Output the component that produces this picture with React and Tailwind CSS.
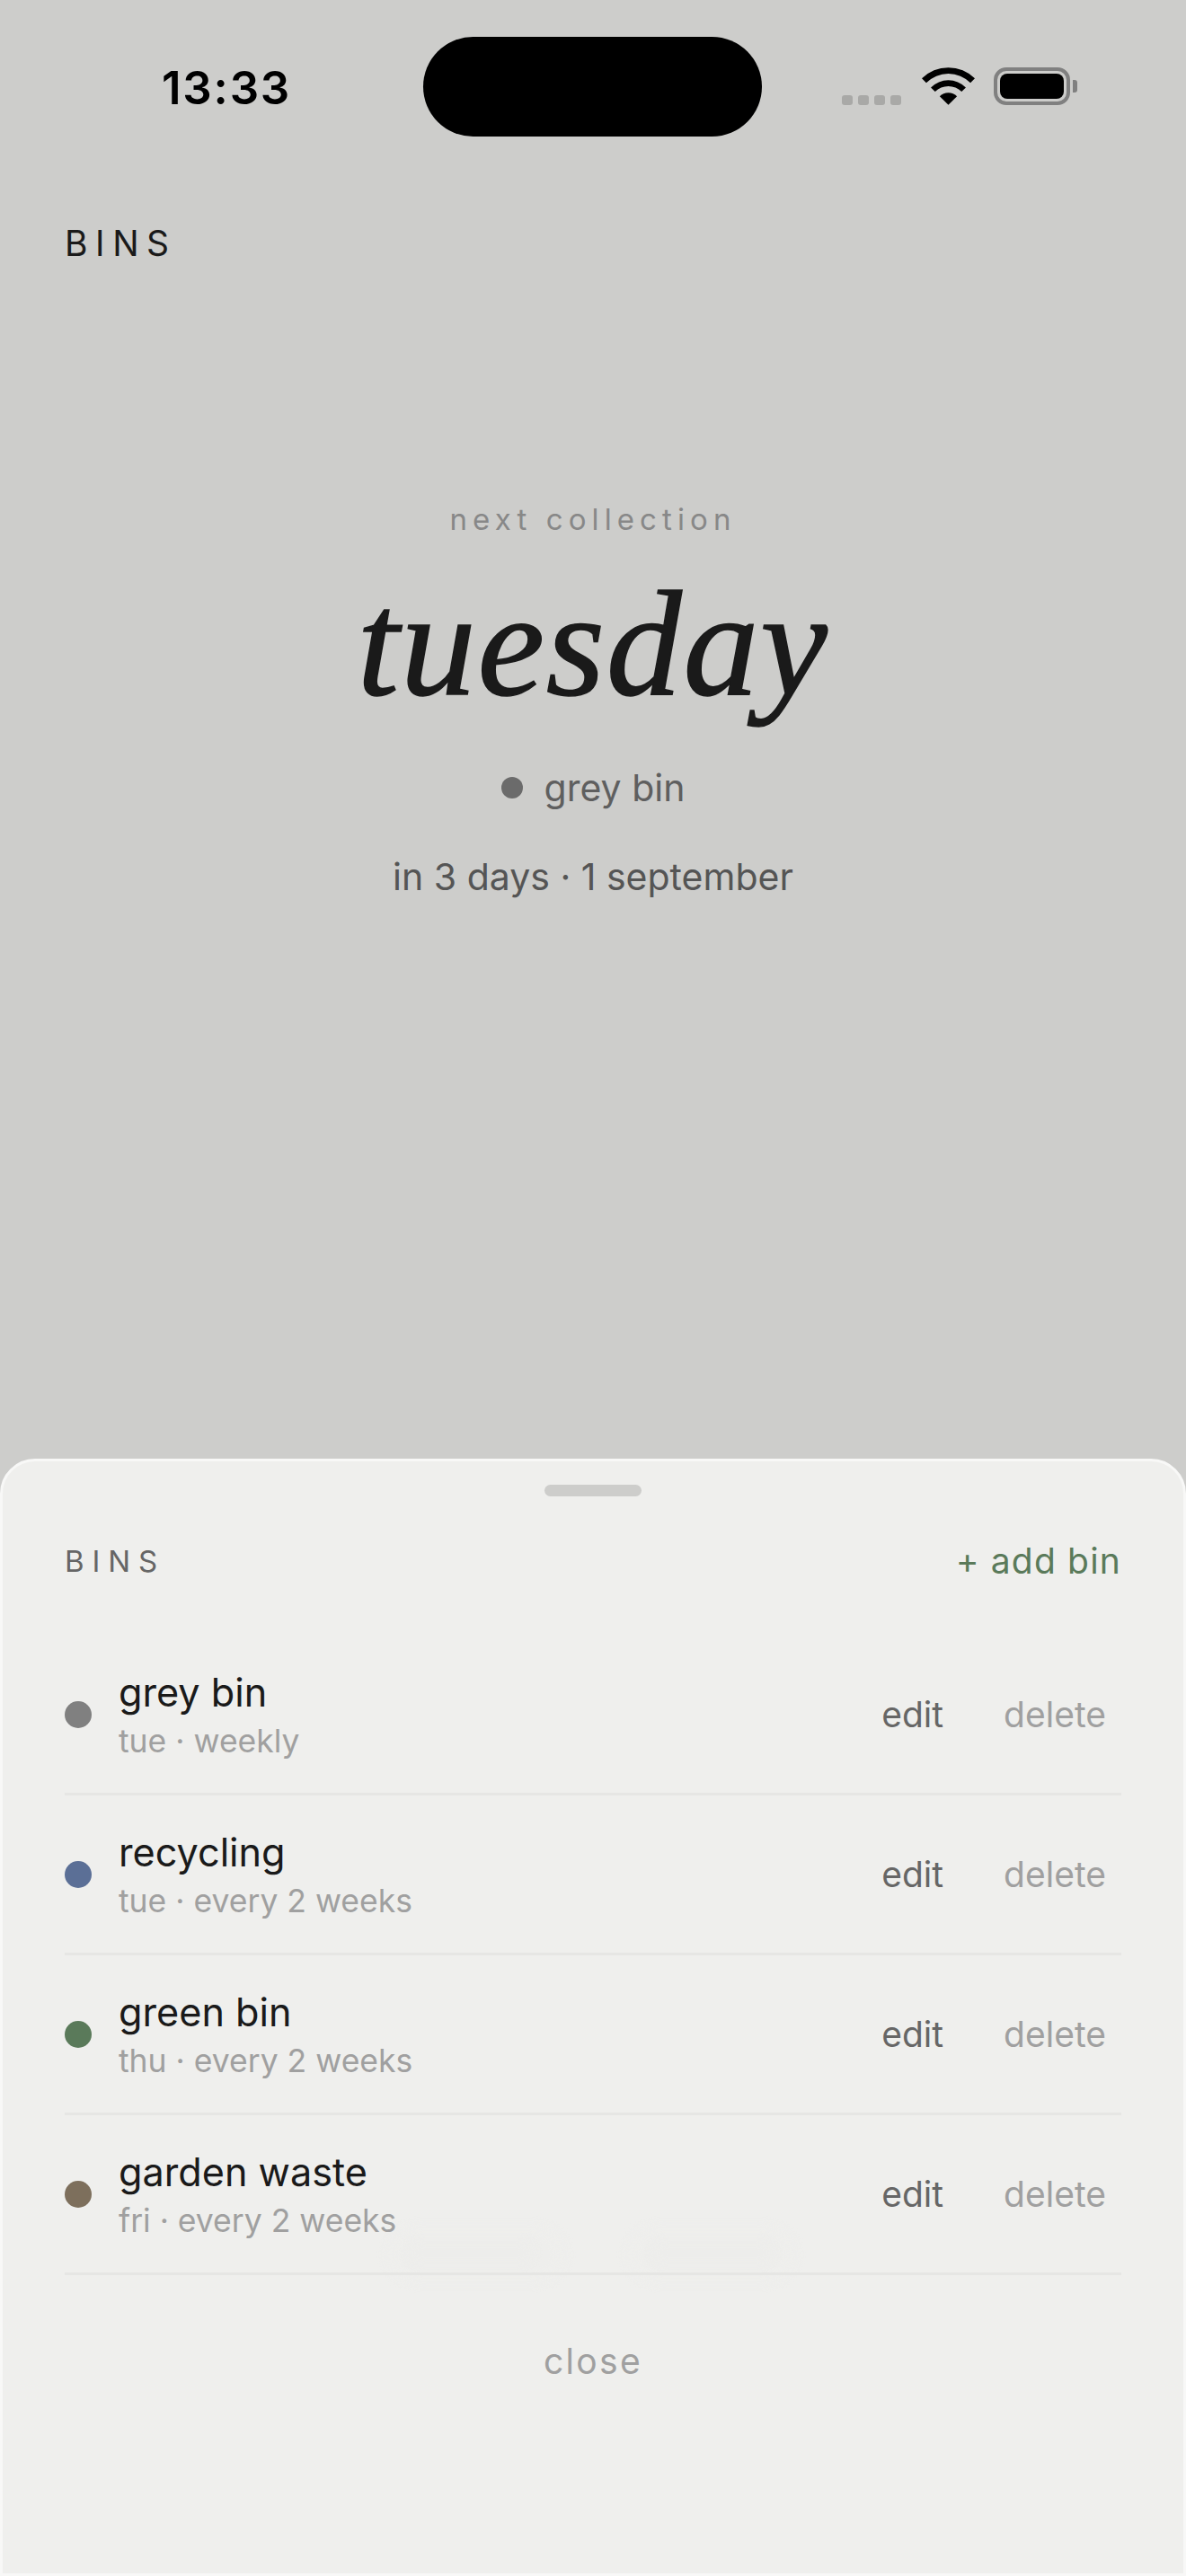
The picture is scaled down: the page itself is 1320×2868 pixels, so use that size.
const rows = [
  { name: "grey bin", sub: "tue · weekly", dot: "bg-[#808080]" },
  { name: "recycling", sub: "tue · every 2 weeks", dot: "bg-[#5b6f96]" },
  { name: "green bin", sub: "thu · every 2 weeks", dot: "bg-[#5a7a5a]" },
  { name: "garden waste", sub: "fri · every 2 weeks", dot: "bg-[#7d6f5c]" },
];

function Wifi() {
  return (
    <svg width="59" height="42" viewBox="-1.2 0 59.4 42" className="block">
      <path d="M-1.2 12.3A42 42 0 0 1 58.2 12.3L53.25 17.25A35 35 0 0 0 3.75 17.25Z" fill="#000" />
      <path d="M8.9 22.4A27.7 27.7 0 0 1 48.1 22.4L43.35 27.15A21 21 0 0 0 13.65 27.15Z" fill="#000" />
      <path d="M18.8 32.3A13.7 13.7 0 0 1 38.2 32.3L28.5 42Z" fill="#000" />
    </svg>
  );
}

function Row({ name, sub, dot }) {
  return (
    <div className="flex h-[178px] items-center border-b-[3px] border-[#e6e6e4] pt-[1px]">
      <span className={`h-[30px] w-[30px] shrink-0 rounded-full ${dot}`} />
      <div className="ml-[30px] flex-1">
        <div className="text-[43.2px] leading-[54px] text-[#1a1a1a]">{name}</div>
        <div className="mt-[5px] text-[35.5px] leading-[46px] text-[#a0a0a0]">{sub}</div>
      </div>
      <span className="text-[39px] leading-[48px] text-[#666666]">edit</span>
      <span className="ml-[67px] mr-[17px] text-[39px] leading-[48px] text-[#a0a0a0]">delete</span>
    </div>
  );
}

function Smudge({ outer, inner }) {
  return (
    <>
      <div className={`absolute top-[853px] h-[60px] rounded-full bg-[#eeeeec] blur-[6px] ${outer}`} />
      <div className={`absolute top-[868px] h-[26px] rounded-full bg-[#ededeb] blur-[4px] ${inner}`} />
    </>
  );
}

export default function App() {
  return (
    <div className="flex h-[2868px] w-[1320px] flex-col overflow-hidden bg-[#cdcdcb] font-['Inter',sans-serif]">
      <div className="flex h-[152px] shrink-0 items-start pt-[41px]">
        <div className="ml-[180px] mt-[27px] w-[291px] text-[51px] font-semibold leading-[60px] tracking-[0.035em] text-black">13:33</div>
        <div className="h-[111px] w-[377px] rounded-[56px] bg-black" />
        <div className="ml-[89px] mt-[65px] flex gap-[6.5px]">
          <span className="h-[11px] w-[11.5px] rounded-[3px] bg-[#a9a9a7]" />
          <span className="h-[11px] w-[11.5px] rounded-[3px] bg-[#a9a9a7]" />
          <span className="h-[11px] w-[11.5px] rounded-[3px] bg-[#a9a9a7]" />
          <span className="h-[11px] w-[11.5px] rounded-[3px] bg-[#a9a9a7]" />
        </div>
        <div className="ml-[23px] mt-[34px]"><Wifi /></div>
        <div className="ml-[21px] mt-[34px] flex items-center">
          <div className="h-[42px] w-[85px] rounded-[14px] border-[4px] border-[#808080] p-[3px]">
            <div className="h-full w-full rounded-[8px] bg-black" />
          </div>
          <div className="ml-[3px] h-[14px] w-[5px] rounded-r-[3px] bg-[#808080]" />
        </div>
      </div>

      <div className="ml-[72px] mt-[95px] text-[39px] leading-[48px] tracking-[0.22em] text-[#1a1a1a]">BINS</div>

      <div className="mt-[263px] flex flex-col items-center">
        <div className="text-[33px] leading-[40px] tracking-[0.185em] text-[#888888]">next collection</div>
        <div className="mt-[23px] font-['Liberation_Serif',serif] text-[168px] italic leading-[190px] tracking-[0.01em] text-[#1a1a1a] [-webkit-text-stroke:1.5px_#1a1a1a]">tuesday</div>
        <div className="mt-[40px] flex items-center gap-[24px]">
          <span className="h-[24px] w-[24px] rounded-full bg-[#6b6b6b]" />
          <span className="text-[41px] leading-[52px] text-[#5f5f5f]">grey bin</span>
        </div>
        <div className="mt-[47px] text-[41px] leading-[52px] text-[#555555]">in 3 days · 1 september</div>
      </div>

      <div className="relative mt-auto h-[1244px] shrink-0 rounded-t-[39px] border-[3px] border-[#f8f8f7] bg-[#efefed] px-[69px]">
        <Smudge outer="left-[430px] w-[194px]" inner="left-[450px] w-[142px]" />
        <Smudge outer="left-[697px] w-[183px]" inner="left-[722px] w-[137px]" />
        <div className="relative">
          <div className="mx-auto mt-[26px] h-[13px] w-[108px] rounded-full bg-[#cdcdcb]" />
          <div className="mt-[48px] flex items-center justify-between">
            <span className="text-[33px] leading-[48px] tracking-[0.27em] text-[#666666]">BINS</span>
            <span className="text-[39px] leading-[48px] tracking-[0.03em] text-[#5a7a5a]">+ add bin</span>
          </div>
          <div className="mt-[59px]">
            {rows.map((r) => <Row key={r.name} {...r} />)}
          </div>
          <div className="mt-[72px] text-center text-[39px] leading-[48px] tracking-[0.06em] text-[#a0a0a0]">close</div>
        </div>
      </div>
    </div>
  );
}
